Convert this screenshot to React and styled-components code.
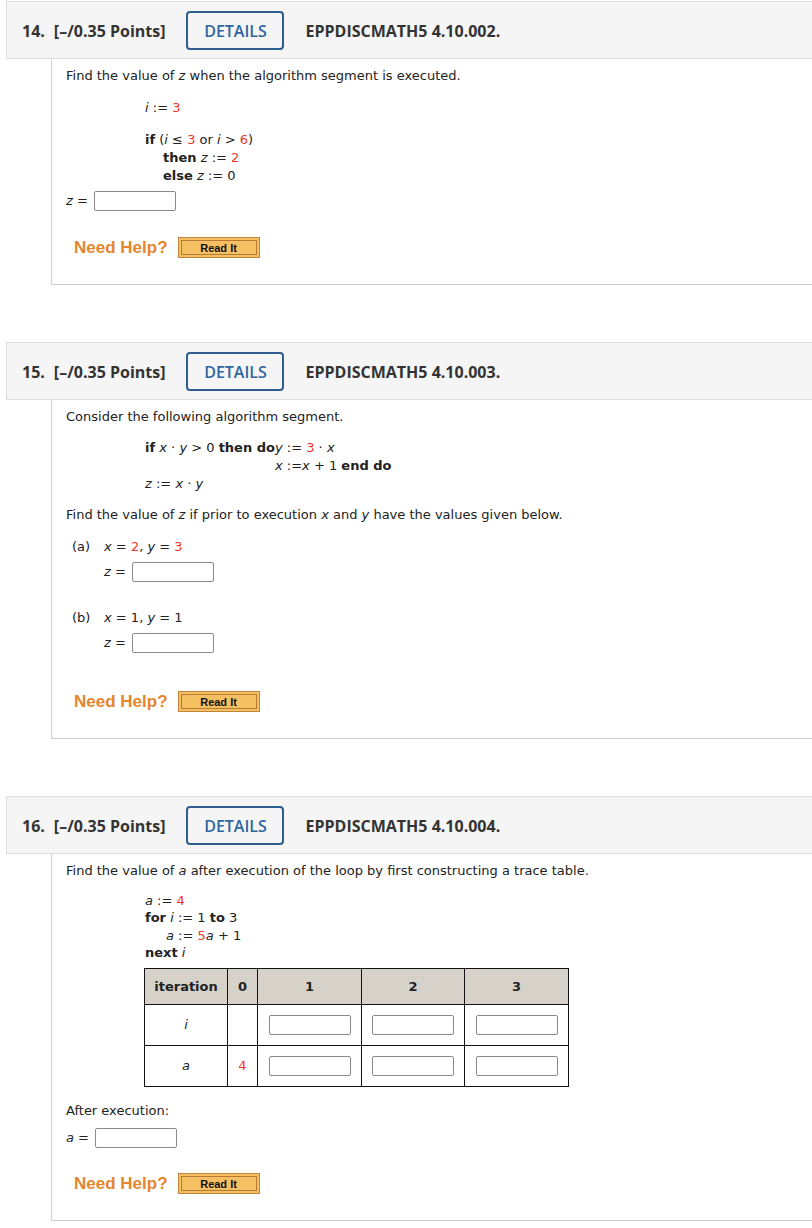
import React from "react";
import styled, { createGlobalStyle } from "styled-components";

const Global = createGlobalStyle`
  html, body { margin: 0; padding: 0; background: #fff; overflow-x: hidden; }
  body { font-family: "DejaVu Sans", Verdana, sans-serif; color: #222; }
`;

const Page = styled.div`
  padding-top: 1px;
`;

const Question = styled.section`
  margin-bottom: 57px;
  &:last-child { margin-bottom: 8px; }
`;

const Header = styled.div`
  margin-left: 6px;
  margin-right: -20px;
  height: 55px;
  border: 1px solid #dcdcdc;
  background: #f5f5f5;
  display: flex;
  align-items: center;
  padding-left: 15px;
  padding-top: 1px;
  font-family: "Open Sans", sans-serif;
  font-weight: 700;
  font-size: 16px;
  color: #333;
`;

const Num = styled.span`
  margin-right: 9px;
`;

const DetailsBtn = styled.span`
  margin-left: 21px;
  margin-right: 21px;
  width: 94px;
  height: 35px;
  border: 2px solid #2c5e8e;
  border-radius: 4px;
  display: flex;
  align-items: center;
  justify-content: center;
  color: #2e66a0;
  font-weight: 600;
  font-size: 16px;
`;

const Body = styled.div`
  margin-left: 51px;
  border-left: 1px solid #cfcfcf;
  border-bottom: 1px solid #cfcfcf;
  padding: 8px 0 ${(p) => p.$pb || 26}px 14px;
  font-size: 13px;
  line-height: 18px;
`;

const P = styled.div`
  margin-top: ${(p) => p.$mt || 0}px;
`;

const Algo = styled.div`
  margin-top: ${(p) => p.$mt || 0}px;
  margin-left: ${(p) => p.$ml ?? 79}px;
  line-height: ${(p) => p.$lh || 18}px;
`;

const Line = styled.div`
  padding-left: ${(p) => p.$indent || 0}px;
  margin-top: ${(p) => p.$mt || 0}px;
`;

const V = styled.i`
  font-style: italic;
`;
const K = styled.b`
  font-weight: 700;
`;
const R = styled.span`
  color: #e8392b;
`;

const Split = styled.div`
  display: flex;
  align-items: flex-start;
`;

const Row = styled.div`
  display: flex;
  align-items: center;
  margin-top: ${(p) => p.$mt || 0}px;
  margin-left: ${(p) => p.$ml || 0}px;
  gap: ${(p) => p.$gap ?? 6}px;
`;

const Input = styled.span`
  display: inline-block;
  width: 80px;
  height: 18px;
  border: 1px solid #8a8a8a;
  border-radius: 2px;
  background: #fff;
`;

const Label = styled.span`
  display: inline-block;
  width: ${(p) => p.$w}px;
`;

const Help = styled.div`
  display: flex;
  align-items: center;
  margin-top: ${(p) => p.$mt || 0}px;
  margin-left: 8px;
  height: 21px;
`;

const HelpText = styled.span`
  font-family: "Liberation Sans", Arial, sans-serif;
  font-weight: 700;
  font-size: 17px;
  color: #e3862e;
  margin-right: 10px;
`;

const ReadIt = styled.span`
  box-sizing: border-box;
  width: 82px;
  height: 21px;
  border: 1px solid #c0843a;
  background: #f5c062;
  padding: 2px;
  display: flex;
`;

const ReadInner = styled.span`
  flex: 1;
  border: 1px solid #b77a35;
  display: flex;
  align-items: center;
  justify-content: center;
  font-family: "Liberation Sans", Arial, sans-serif;
  font-weight: 700;
  font-size: 11px;
  color: #111;
`;

const Table = styled.table`
  margin-top: 7px;
  margin-left: 78px;
  border-collapse: collapse;
  font-size: 13px;
  td, th {
    border: 1px solid #111;
    text-align: center;
    padding: 0;
  }
  th {
    background: #d6d2ca;
    height: 35px;
    font-weight: 700;
  }
  td { height: 40px; }
`;

const CellInput = styled(Input)`
  vertical-align: middle;
`;

const NeedHelp = ({ mt }) => (
  <Help $mt={mt}>
    <HelpText>Need Help?</HelpText>
    <ReadIt>
      <ReadInner>Read It</ReadInner>
    </ReadIt>
  </Help>
);

const QHeader = ({ n, code }) => (
  <Header>
    <Num>{n}.</Num>
    <span>[–/0.35 Points]</span>
    <DetailsBtn>DETAILS</DetailsBtn>
    <span>{code}</span>
  </Header>
);

export default function App() {
  return (
    <Page>
      <Global />
      <Question>
        <QHeader n={14} code="EPPDISCMATH5 4.10.002." />
        <Body>
          <P>
            Find the value of <V>z</V> when the algorithm segment is executed.
          </P>
          <Algo $mt={14}>
            <Line>
              <V>i</V> := <R>3</R>
            </Line>
            <Line $mt={14}>
              <K>if</K> (<V>i</V> ≤ <R>3</R> or <V>i</V> &gt; <R>6</R>)
            </Line>
            <Line $indent={18}>
              <K>then</K> <V>z</V> := <R>2</R>
            </Line>
            <Line $indent={18}>
              <K>else</K> <V>z</V> := 0
            </Line>
          </Algo>
          <Row $mt={6}>
            <span>
              <V>z</V> =
            </span>
            <Input />
          </Row>
          <NeedHelp mt={26} />
        </Body>
      </Question>

      <Question>
        <QHeader n={15} code="EPPDISCMATH5 4.10.003." />
        <Body $pb={26}>
          <P>Consider the following algorithm segment.</P>
          <Algo $mt={13}>
            <Split>
              <span>
                <K>if</K> <V>x</V> · <V>y</V> &gt; 0 <K>then do</K>
              </span>
              <div>
                <Line>
                  <V>y</V> := <R>3</R> · <V>x</V>
                </Line>
                <Line>
                  <V>x</V> :=<V>x</V> + 1 <K>end do</K>
                </Line>
              </div>
            </Split>
            <Line>
              <V>z</V> := <V>x</V> · <V>y</V>
            </Line>
          </Algo>
          <P $mt={13}>
            Find the value of <V>z</V> if prior to execution <V>x</V> and <V>y</V> have the values
            given below.
          </P>
          <Row $mt={14} $ml={6} $gap={0}>
            <Label $w={32}>(a)</Label>
            <span>
              <V>x</V> = <R>2</R>, <V>y</V> = <R>3</R>
            </span>
          </Row>
          <Row $mt={6} $ml={38}>
            <span>
              <V>z</V> =
            </span>
            <Input />
          </Row>
          <Row $mt={27} $ml={6} $gap={0}>
            <Label $w={32}>(b)</Label>
            <span>
              <V>x</V> = 1, <V>y</V> = 1
            </span>
          </Row>
          <Row $mt={6} $ml={38}>
            <span>
              <V>z</V> =
            </span>
            <Input />
          </Row>
          <NeedHelp mt={38} />
        </Body>
      </Question>

      <Question>
        <QHeader n={16} code="EPPDISCMATH5 4.10.004." />
        <Body>
          <P>
            Find the value of <V>a</V> after execution of the loop by first constructing a trace
            table.
          </P>
          <Algo $mt={12} $lh={17.3}>
            <Line>
              <V>a</V> := <R>4</R>
            </Line>
            <Line>
              <K>for</K> <V>i</V> := 1 <K>to</K> 3
            </Line>
            <Line $indent={21}>
              <V>a</V> := <R>5</R>
              <V>a</V> + 1
            </Line>
            <Line>
              <K>next</K> <V>i</V>
            </Line>
          </Algo>
          <Table>
            <thead>
              <tr>
                <th style={{ width: 82 }}>iteration</th>
                <th style={{ width: 29 }}>0</th>
                <th style={{ width: 103 }}>1</th>
                <th style={{ width: 102 }}>2</th>
                <th style={{ width: 103 }}>3</th>
              </tr>
            </thead>
            <tbody>
              <tr>
                <td>
                  <V>i</V>
                </td>
                <td></td>
                <td>
                  <CellInput />
                </td>
                <td>
                  <CellInput />
                </td>
                <td>
                  <CellInput />
                </td>
              </tr>
              <tr>
                <td>
                  <V>a</V>
                </td>
                <td>
                  <R>4</R>
                </td>
                <td>
                  <CellInput />
                </td>
                <td>
                  <CellInput />
                </td>
                <td>
                  <CellInput />
                </td>
              </tr>
            </tbody>
          </Table>
          <P $mt={15}>After execution:</P>
          <Row $mt={8}>
            <span>
              <V>a</V> =
            </span>
            <Input />
          </Row>
          <NeedHelp mt={25} />
        </Body>
      </Question>
    </Page>
  );
}
